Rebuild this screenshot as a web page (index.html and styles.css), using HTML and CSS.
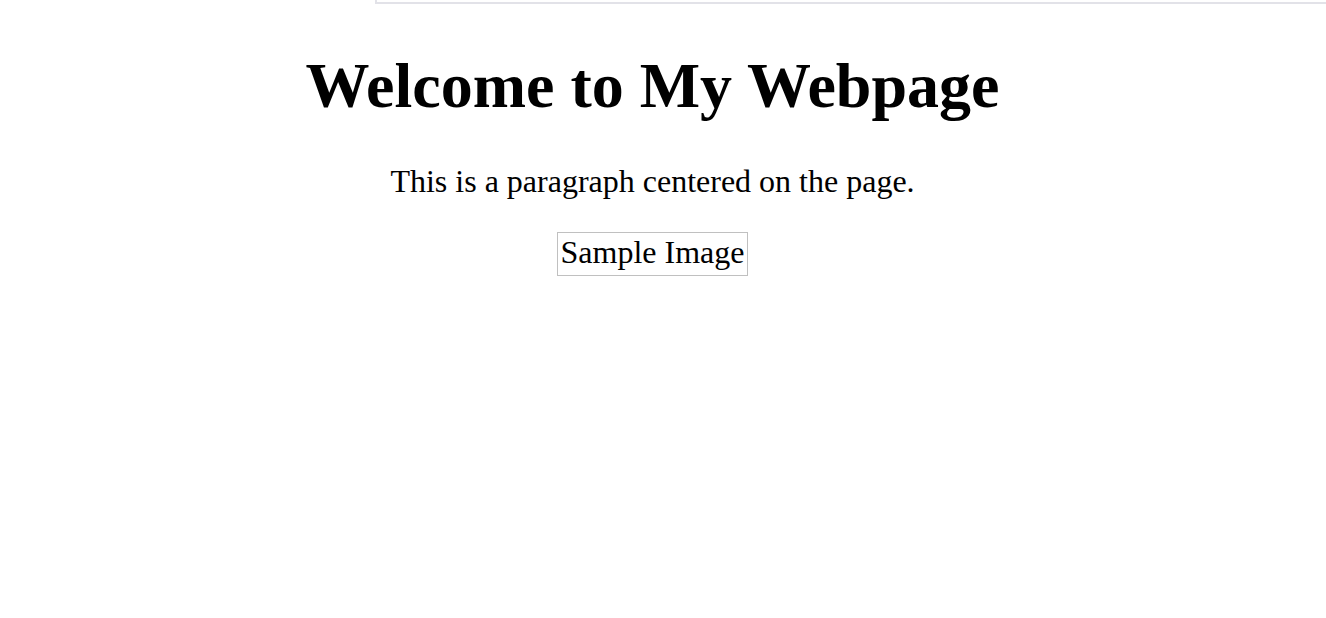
FILE: index.html
```html
<!DOCTYPE html>
<html lang="en">
<head>
<meta charset="utf-8">
<title>Welcome to My Webpage</title>
<link rel="stylesheet" href="styles.css">
</head>
<body>
<div class="topframe"></div>
<main class="page">
  <h1 class="title">Welcome to My Webpage</h1>
  <p class="lead">This is a paragraph centered on the page.</p>
  <div class="figure"><span class="img-alt">Sample Image</span></div>
</main>
</body>
</html>
```
FILE: styles.css
```css
html, body {
  margin: 0;
  padding: 0;
  background: #ffffff;
}
body {
  font-family: "Liberation Serif", "Times New Roman", Times, serif;
  color: #000000;
  overflow: hidden;
}
.topframe {
  position: fixed;
  left: 375px;
  right: 0;
  top: -100px;
  height: 104px;
  box-sizing: border-box;
  border-left: 2px solid #e2e2e8;
  border-bottom: 2px solid #e2e2e8;
}
.page {
  width: 1289px;
  margin: 0 0 0 8px;
  padding-top: 49px;
  text-align: center;
}
.title {
  margin: 0;
  font-size: 64px;
  font-weight: bold;
  line-height: 74px;
}
.lead {
  margin: 40px 0 0 0;
  font-size: 32px;
  line-height: 37px;
}
.figure {
  margin-top: 32px;
  font-size: 32px;
  line-height: 37px;
}
.img-alt {
  display: inline-block;
  border: 1px solid #c0c0c0;
  padding: 1px 3px 4px 3px;
  line-height: 37px;
  vertical-align: top;
}
```
